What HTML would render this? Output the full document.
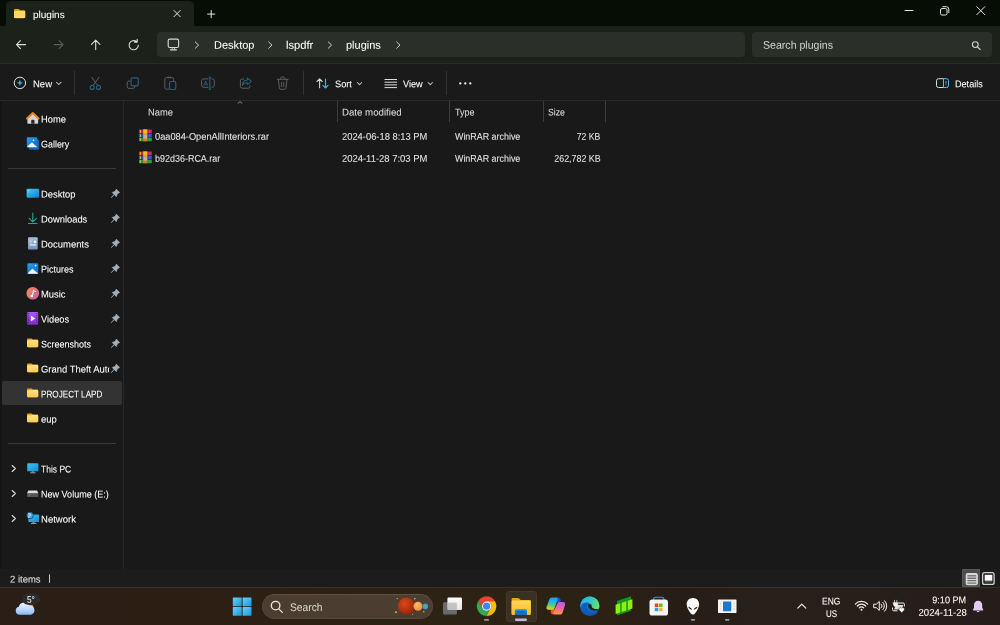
<!DOCTYPE html>
<html><head><meta charset="utf-8"><title>plugins</title>
<style>
*{box-sizing:border-box;margin:0;padding:0}
html,body{width:1000px;height:625px;overflow:hidden;background:#191919;font-family:"Liberation Sans",sans-serif;color:#fff}
.a{position:absolute}
.t{position:absolute;white-space:nowrap;line-height:1;}
#titlebar{left:0;top:0;width:1000px;height:26px;background:#060d05}
#tab{left:6px;top:0.6px;width:187.8px;height:25.4px;background:#1c211a;border-radius:5px 5px 0 0}
#navbar{left:0;top:26px;width:1000px;height:37.4px;background:#1c211a}
#addr{left:156.8px;top:32.2px;width:588px;height:25.1px;background:#2b2f29;border-radius:4px}
#search{left:751.7px;top:32.2px;width:240px;height:25.1px;background:#2b2f29;border-radius:4px}
#toolbar{left:0;top:63.3px;width:1000px;height:38.1px;background:#1a1a1a;border-top:1.4px solid #2a2a2a;border-bottom:1.4px solid #292929}
#sidebar{left:0;top:101px;width:124px;height:468px;background:#191919;border-right:1px solid #292929}
#sel{left:1.8px;top:380.9px;width:120px;height:24.6px;background:#333333;border-radius:2px}
#status{left:0;top:569px;width:1000px;height:18px;background:#1c1c1c}
#taskbar{left:0;top:587.3px;width:1000px;height:38px;background:linear-gradient(90deg,#2b1e16 0%,#2d1e13 20%,#2c2314 44%,#2c2214 60%,#271d17 68%,#28201a 77%,#251d19 100%);border-top:1.4px solid #3a3026}
#tsearch{left:261.8px;top:593.8px;width:171.6px;height:24.8px;background:#4b3e31;border-radius:12.4px;border:1px solid #55483b;border-top-color:#5e5246}
#tactive{left:505.6px;top:590.8px;width:31px;height:30.8px;background:#3a3123;border-radius:3px;border:1px solid #443a2c}
#viewsel{left:962.4px;top:569.2px;width:17.4px;height:18.2px;background:#4d4d4d;border:1px solid #585858}
.sep{position:absolute;height:1px;background:#3a3a3a;left:8px;width:108px}
.vsep{position:absolute;width:1px;background:#333}
.csep{position:absolute;width:1.2px;background:#3c3c3c;top:100.6px;height:21px}
</style></head><body>
<div class="a" id="titlebar"></div>
<div class="a" id="tab"></div>
<div class="a" id="navbar"></div>
<div class="a" id="addr"></div>
<div class="a" id="search"></div>
<div class="a" id="toolbar"></div>
<div class="a" id="sidebar"></div>
<div class="a" id="sel"></div>
<div class="a" style="left:0;top:102px;width:1.5px;height:467px;background:#141414"></div>
<div class="sep" style="top:168px"></div>
<div class="sep" style="top:443px"></div>
<div class="vsep" style="left:74px;top:71px;height:24px"></div>
<div class="vsep" style="left:303px;top:71px;height:24px"></div>
<div class="vsep" style="left:446px;top:71px;height:24px"></div>
<div class="csep" style="left:336.9px"></div>
<div class="csep" style="left:449px"></div>
<div class="csep" style="left:543px"></div>
<div class="csep" style="left:605px"></div>
<div class="a" id="status"></div>
<div class="a" id="viewsel"></div>
<div class="a" id="taskbar"></div>
<div class="a" id="tsearch"></div>
<div class="a" id="tactive"></div>
<svg class="a" width="1000" height="625" viewBox="0 0 1000 625" style="left:0;top:0">
<!-- tab folder -->
<g id="tabfolder">
<path d="M14 10.2c0-.7.5-1.2 1.2-1.2h3.1c.4 0 .7.1 1 .4l1 .9h3.7c.7 0 1.2.5 1.2 1.2v5.5c0 .7-.5 1.2-1.2 1.2h-8.800c-.7 0-1.200-.5-1.200-1.200z" fill="#e6a21c"/>
<path d="M14 12c0-.6.5-1.100 1.100-1.100h9c.6 0 1.100.5 1.100 1.100v5c0 .6-.5 1.100-1.100 1.100h-9c-.6 0-1.100-.5-1.100-1.100z" fill="#ffd968"/>
</g>
<!-- tab close, plus -->
<g stroke="#e4e4e4" stroke-width="1" fill="none" stroke-linecap="round">
<path d="M174 10.500l6.200 6.200M180.200 10.500l-6.200 6.200"/>
<path d="M207.200 14.100h8M211.200 10.100v8" stroke-linecap="butt"/>
<!-- window controls -->
<path d="M905 10.500h8"/>
<path d="M976.800 6.700l8 8M984.800 6.700l-8 8"/>
</g>
<g stroke="#e4e4e4" stroke-width="1" fill="none">
<rect x="940.500" y="8.500" width="6.500" height="6.500" rx="1.500"/>
<path d="M942.500 6.700h3.800a2.500 2.500 0 0 1 2.500 2.500v3.800"/>
</g>
<!-- nav arrows -->
<g stroke="#dcdcdc" stroke-width="1.100" fill="none" stroke-linecap="round" stroke-linejoin="round">
<path d="M25.600 44.600h-8.800M20.400 40.700l-3.900 3.900 3.900 3.900"/>
<path d="M95.700 49.600v-9.200M91.500 44.400l4.200-4.200 4.200 4.200"/>
<path d="M138.300 45.200a4.600 4.600 0 1 1-1.800-3.650M137.200 39.400v2.700h-2.700"/>
</g>
<g stroke="#5b5e5a" stroke-width="1.100" fill="none" stroke-linecap="round" stroke-linejoin="round">
<path d="M54.200 44.600h8.800M59.200 40.700l3.900 3.900-3.900 3.900"/>
</g>
<!-- monitor in address -->
<g stroke="#d8d8d8" stroke-width="1.100" fill="none" stroke-linecap="round" stroke-linejoin="round">
<rect x="168.200" y="39.100" width="10.400" height="8.400" rx="1.500"/>
<path d="M170.400 49.800h6" stroke-width="1.300"/><path d="M172.200 48v1.500M174.600 48v1.500" stroke-width=".9"/>
</g>
<!-- breadcrumbs chevrons -->
<g stroke="#d0d0d0" stroke-width="1" fill="none" stroke-linecap="round" stroke-linejoin="round">
<path d="M195.300 42l3.300 3.100-3.300 3.100"/>
<path d="M268.700 42l3.300 3.100-3.300 3.100"/>
<path d="M328.300 42l3.300 3.100-3.300 3.100"/>
<path d="M396.700 42l3.300 3.100-3.300 3.100"/>
</g>
<!-- search icon -->
<g stroke="#d4d4d4" stroke-width="1.100" fill="none" stroke-linecap="round">
<circle cx="975.300" cy="44.600" r="2.900"/>
<path d="M977.500 46.800l2.700 2.700"/>
</g>
<!-- NEW -->
<circle cx="19.900" cy="82.900" r="5.700" fill="none" stroke="#e4e4e4" stroke-width="1"/>
<path d="M17.500 82.900h4.800M19.900 80.500v4.800" stroke="#3fb0ea" stroke-width="1.300" stroke-linecap="butt"/>
<g stroke="#c2c2c2" stroke-width="1.050" fill="none" stroke-linecap="round" stroke-linejoin="round">
<path d="M56.600 82.300l2.200 2.200 2.200-2.200"/>
<path d="M357.300 82.500l2.200 2.200 2.200-2.200"/>
<path d="M428.100 82.500l2.200 2.200 2.200-2.200"/>
</g>
<!-- cut -->
<g fill="none" stroke-width="1" stroke-linecap="round">
<path d="M91.700 77.300l6 8.300M99 77.300l-6 8.300" stroke="#5e5e5e"/>
<circle cx="92.200" cy="87.400" r="2" stroke="#27607f" stroke-width="1.150"/>
<circle cx="98.500" cy="87.400" r="2" stroke="#27607f" stroke-width="1.150"/>
</g>
<!-- copy -->
<g fill="none" stroke-width="1">
<path d="M130.300 81h-1.300a1.800 1.800 0 0 0-1.800 1.800v3.800a1.800 1.800 0 0 0 1.800 1.800h4a1.800 1.800 0 0 0 1.800-1.800v-.600" stroke="#5e5e5e"/>
<rect x="131.100" y="77.900" width="7.200" height="8" rx="1.600" stroke="#27607f" stroke-width="1.150"/>
</g>
<!-- paste -->
<g fill="none" stroke-width="1">
<path d="M169 89.200h-2.400a1.800 1.800 0 0 1-1.800-1.800v-8a1.800 1.800 0 0 1 1.800-1.800h5.300a1.800 1.800 0 0 1 1.800 1.800v1.600" stroke="#5e5e5e"/>
<path d="M167.500 77.400h3.600" stroke="#5e5e5e" stroke-width="1.400"/>
<rect x="169.500" y="81.500" width="6.300" height="8" rx="1.400" stroke="#27607f" stroke-width="1.150"/>
</g>
<!-- rename -->
<g fill="none" stroke-width="1">
<path d="M208.300 78.900h-4.700a2 2 0 0 0-2 2v4.400a2 2 0 0 0 2 2h4.700M211.500 78.900h.8a2 2 0 0 1 2 2v4.400a2 2 0 0 1-2 2h-.8" stroke="#5e5e5e"/>
<path d="M203.900 85.600l1.800-4.600 1.800 4.600M204.500 84.200h2.400" stroke="#27607f" stroke-width=".9"/>
<path d="M209.900 77.400v11.800M208.700 77.300h2.400M208.700 89.300h2.400" stroke="#27607f" stroke-width="1.100"/>
</g>
<!-- share -->
<g fill="none" stroke-width="1" stroke-linejoin="round">
<path d="M244.200 79h-2a1.800 1.800 0 0 0-1.800 1.800v5.600a1.800 1.800 0 0 0 1.800 1.800h6a1.800 1.800 0 0 0 1.800-1.800v-1.200" stroke="#5e5e5e"/>
<path d="M247.400 77.900l4 3.400-4 3.400v-2c-2.300 0-3.900.8-5 2.500.2-3 1.900-4.900 5-5.300z" stroke="#27607f" stroke-width="1.050"/>
</g>
<!-- delete -->
<g fill="none" stroke-width="1" stroke="#5e5e5e" stroke-linecap="round">
<path d="M277.300 79.300h10.800M280.600 79v-.6a1.400 1.400 0 0 1 1.400-1.400h1.400a1.400 1.400 0 0 1 1.400 1.400v.6"/>
<path d="M278.500 79.500l.8 8.300a1.700 1.700 0 0 0 1.700 1.500h3.400a1.700 1.700 0 0 0 1.700-1.500l.8-8.300"/>
<path d="M281.600 82.200v4.300M283.800 82.200v4.300"/>
</g>
<!-- sort -->
<g fill="none" stroke-width="1.100" stroke-linecap="round" stroke-linejoin="round">
<path d="M319.600 87.700v-8.700M317 81.500l2.600-2.600 2.600 2.600" stroke="#d6d6d6"/>
<path d="M325.500 79v8.900M322.900 85.400l2.600 2.600 2.600-2.600" stroke="#43b4ee"/>
</g>
<!-- view -->
<g stroke="#dedede" stroke-width="1" stroke-linecap="butt">
<path d="M384.500 79.500h12.500M384.500 82.200h12.500M384.500 84.900h12.500M384.500 87.600h12.500"/>
</g>
<!-- more -->
<g fill="#f0f0f0"><circle cx="460.300" cy="83.400" r="1.150"/><circle cx="465.300" cy="83.400" r="1.150"/><circle cx="470.300" cy="83.400" r="1.150"/></g>
<!-- details pane icon -->
<g fill="none" stroke-width="1">
<path d="M943.500 78.700h-5a2 2 0 0 0-2 2v4.800a2 2 0 0 0 2 2h5" stroke="#dedede"/>
<path d="M943.500 78.700h3a2 2 0 0 1 2 2v4.800a2 2 0 0 1-2 2h-3z" stroke="#4cc2ff"/>
<path d="M946 81v2.600M946 84.600v.8" stroke="#4cc2ff" stroke-width=".9"/>
</g>
<!-- sort caret above Name -->
<path d="M237.800 103.500l2.200-1.900 2.200 1.900" stroke="#9a9a9a" stroke-width=".9" fill="none"/>
<path d="M3.500 26h2.500v-2.500a2.500 2.500 0 0 1-2.500 2.500z" fill="#1c211a"/>
<path d="M196.300 26h-2.500v-2.500a2.500 2.500 0 0 0 2.500 2.500z" fill="#1c211a"/>
<defs>
<linearGradient id="gDesk" x1="0" y1="0" x2="1" y2="1"><stop offset="0" stop-color="#3ad0ee"/><stop offset="1" stop-color="#157cd0"/></linearGradient>
<linearGradient id="gPic" x1="0" y1="0" x2="0.6" y2="1"><stop offset="0" stop-color="#22a0f4"/><stop offset="1" stop-color="#0f6cc8"/></linearGradient>
<linearGradient id="gDoc" x1="0" y1="0" x2="0" y2="1"><stop offset="0" stop-color="#aabedb"/><stop offset="1" stop-color="#7a93bd"/></linearGradient>
<linearGradient id="gMus" x1="0" y1="0.2" x2="1" y2="0.9"><stop offset="0" stop-color="#f38a52"/><stop offset="1" stop-color="#c45cb0"/></linearGradient>
<linearGradient id="gVid" x1="0" y1="0" x2="0" y2="1"><stop offset="0" stop-color="#a85cf4"/><stop offset="1" stop-color="#7c2cc4"/></linearGradient>
<linearGradient id="gFol" x1="0" y1="0" x2="0" y2="1"><stop offset="0" stop-color="#ffe28e"/><stop offset="1" stop-color="#ffcd4c"/></linearGradient>
<linearGradient id="gPC" x1="0" y1="0" x2="1" y2="1"><stop offset="0" stop-color="#34c8f2"/><stop offset="1" stop-color="#168ad6"/></linearGradient>
<linearGradient id="gStrap" x1="0" y1="0" x2="0" y2="1"><stop offset="0" stop-color="#f2cc2a"/><stop offset=".45" stop-color="#ec9a1e"/><stop offset="1" stop-color="#dc6e16"/></linearGradient>
</defs>
<!-- Home -->
<path d="M27.400 117.300l5.400-4.400 5.400 4.400v5.400c0 .600-.500 1.100-1.100 1.100h-8.600c-.600 0-1.100-.500-1.100-1.100z" fill="#d4d4d4"/>
<path d="M31.200 123.800v-3c0-.600.500-1.100 1.100-1.100h1.100c.600 0 1.100.500 1.100 1.100v3z" fill="#2a2a2a"/>
<path d="M27 118.500l5.800-5.500 5.800 5.500" fill="none" stroke="#f0820f" stroke-width="2" stroke-linecap="round" stroke-linejoin="round"/>
<!-- Gallery -->
<rect x="28.800" y="139.600" width="10.400" height="10.200" rx="1.300" fill="#1763b5"/>
<rect x="26.800" y="137.200" width="10.500" height="10.100" rx="1.300" fill="url(#gPic)"/>
<path d="M27.300 147l4.500-4.600 4.900 4.600z" fill="#fff" stroke="#fff" stroke-width=".5" stroke-linejoin="round"/>
<circle cx="33.500" cy="140.200" r=".800" fill="#fff"/>
<!-- Desktop -->
<rect x="26.600" y="188.800" width="12.600" height="9" rx="1.100" fill="url(#gDesk)"/>
<rect x="27.700" y="190" width=".900" height=".800" fill="#c8f4ff"/><rect x="27.700" y="191.600" width=".900" height=".800" fill="#c8f4ff"/>
<rect x="35" y="196.700" width="3.200" height=".600" fill="#0d5fae"/>
<!-- Downloads -->
<g fill="none" stroke="#1fab8b" stroke-width="1.100" stroke-linecap="round" stroke-linejoin="round">
<path d="M32.800 213.100v8.400M29.100 218.300l3.700 3.500 3.700-3.500M28.500 223.500h8.600"/>
</g>
<!-- Documents -->
<rect x="28" y="237.200" width="9.700" height="12.300" rx="1.100" fill="url(#gDoc)"/>
<path d="M29.800 241h1.900M29.800 242.800h1.900" stroke="#e8f0ff" stroke-width=".700"/>
<rect x="33.800" y="240.700" width="2.200" height="2.300" fill="#f4f8ff"/>
<path d="M29.800 244.900h6.200" stroke="#e8f0ff" stroke-width="1.200"/>
<!-- Pictures -->
<rect x="27.400" y="263.200" width="10.900" height="10.700" rx="1.300" fill="url(#gPic)"/>
<path d="M27.900 273.400l4.500-4.500 5.400 4.500z" fill="#fff" stroke="#fff" stroke-width=".5" stroke-linejoin="round"/>
<circle cx="35.600" cy="265.600" r=".900" fill="#fff"/>
<!-- Music -->
<circle cx="32.800" cy="293.200" r="6.300" fill="url(#gMus)"/>
<circle cx="31.700" cy="296" r="1.300" fill="#fff"/>
<path d="M32.500 296l.9-5.600 2.400 1.200" fill="none" stroke="#fff" stroke-width="1" stroke-linejoin="round" stroke-linecap="round"/>
<!-- Videos -->
<rect x="27.200" y="312" width="11" height="12.800" rx="1.100" fill="url(#gVid)"/>
<path d="M28.700 313v11M36.800 313v11" stroke="#5a1c9a" stroke-width="1.200" stroke-dasharray="1.100 1.100"/>
<path d="M30.900 315.600v5.800l4.400-2.900z" fill="#f4ecff"/>
<!-- folders -->
<g transform="translate(27 338.600)">
<path d="M0 1.100c0-.6.500-1.100 1.100-1.100h3c.400 0 .700.100 1 .400l.900.800h4.100c.600 0 1.100.500 1.100 1.100v5.200c0 .600-.500 1.100-1.100 1.100h-9c-.600 0-1.100-.500-1.100-1.100z" fill="#e9a318"/>
<path d="M0 2.600c0-.500.400-.900.900-.900h2.600c.500 0 .900-.100 1.300-.400l.300-.200h5c.600 0 1.100.500 1.100 1.100v5.300c0 .600-.500 1.100-1.100 1.100h-9c-.600 0-1.100-.500-1.100-1.100z" fill="url(#gFol)"/>
</g>
<g transform="translate(27 363.600)">
<path d="M0 1.100c0-.6.500-1.100 1.100-1.100h3c.400 0 .700.100 1 .400l.900.800h4.100c.600 0 1.100.500 1.100 1.100v5.200c0 .600-.500 1.100-1.100 1.100h-9c-.600 0-1.100-.500-1.100-1.100z" fill="#e9a318"/>
<path d="M0 2.600c0-.500.400-.900.900-.900h2.600c.500 0 .900-.100 1.300-.400l.300-.200h5c.600 0 1.100.500 1.100 1.100v5.300c0 .600-.500 1.100-1.100 1.100h-9c-.600 0-1.100-.500-1.100-1.100z" fill="url(#gFol)"/>
</g>
<g transform="translate(27 388.600)">
<path d="M0 1.100c0-.6.500-1.100 1.100-1.100h3c.400 0 .700.100 1 .400l.900.800h4.100c.600 0 1.100.500 1.100 1.100v5.200c0 .600-.500 1.100-1.100 1.100h-9c-.600 0-1.100-.500-1.100-1.100z" fill="#e9a318"/>
<path d="M0 2.600c0-.500.400-.900.900-.900h2.600c.500 0 .900-.100 1.300-.400l.300-.200h5c.600 0 1.100.500 1.100 1.100v5.300c0 .600-.500 1.100-1.100 1.100h-9c-.600 0-1.100-.500-1.100-1.100z" fill="url(#gFol)"/>
</g>
<g transform="translate(27 413.600)">
<path d="M0 1.100c0-.6.500-1.100 1.100-1.100h3c.400 0 .700.100 1 .400l.900.800h4.100c.600 0 1.100.500 1.100 1.100v5.200c0 .600-.500 1.100-1.100 1.100h-9c-.600 0-1.100-.500-1.100-1.100z" fill="#e9a318"/>
<path d="M0 2.600c0-.500.400-.900.900-.900h2.600c.500 0 .900-.100 1.300-.400l.300-.200h5c.600 0 1.100.500 1.100 1.100v5.300c0 .600-.500 1.100-1.100 1.100h-9c-.600 0-1.100-.500-1.100-1.100z" fill="url(#gFol)"/>
</g>
<!-- pins -->
<g transform="translate(111 189)"><path d="M5.300 0.100L8.700 3.500L6.500 4.700L5.300 7.700L3.300 5.700L0.350 8.650L0.150 8.450L3.100 5.500L1.100 3.500L4.100 2.300Z" fill="#a3afb8" stroke="#a3afb8" stroke-width=".5" stroke-linejoin="round"/></g><g transform="translate(111 214)"><path d="M5.300 0.100L8.700 3.500L6.500 4.700L5.300 7.700L3.300 5.700L0.350 8.650L0.150 8.450L3.100 5.500L1.100 3.500L4.100 2.300Z" fill="#a3afb8" stroke="#a3afb8" stroke-width=".5" stroke-linejoin="round"/></g><g transform="translate(111 239)"><path d="M5.300 0.100L8.700 3.500L6.500 4.700L5.300 7.700L3.300 5.700L0.350 8.650L0.150 8.450L3.100 5.500L1.100 3.500L4.100 2.300Z" fill="#a3afb8" stroke="#a3afb8" stroke-width=".5" stroke-linejoin="round"/></g><g transform="translate(111 264)"><path d="M5.300 0.100L8.700 3.500L6.500 4.700L5.300 7.700L3.300 5.700L0.350 8.650L0.150 8.450L3.100 5.500L1.100 3.500L4.100 2.300Z" fill="#a3afb8" stroke="#a3afb8" stroke-width=".5" stroke-linejoin="round"/></g>
<g transform="translate(111 289)"><path d="M5.300 0.100L8.700 3.500L6.500 4.700L5.300 7.700L3.300 5.700L0.350 8.650L0.150 8.450L3.100 5.500L1.100 3.500L4.100 2.300Z" fill="#a3afb8" stroke="#a3afb8" stroke-width=".5" stroke-linejoin="round"/></g><g transform="translate(111 314)"><path d="M5.300 0.100L8.700 3.500L6.500 4.700L5.300 7.700L3.300 5.700L0.350 8.650L0.150 8.450L3.100 5.500L1.100 3.500L4.100 2.300Z" fill="#a3afb8" stroke="#a3afb8" stroke-width=".5" stroke-linejoin="round"/></g><g transform="translate(111 339)"><path d="M5.300 0.100L8.700 3.500L6.500 4.700L5.300 7.700L3.300 5.700L0.350 8.650L0.150 8.450L3.100 5.500L1.100 3.500L4.100 2.300Z" fill="#a3afb8" stroke="#a3afb8" stroke-width=".5" stroke-linejoin="round"/></g><g transform="translate(111 364)"><path d="M5.300 0.100L8.700 3.500L6.500 4.700L5.300 7.700L3.300 5.700L0.350 8.650L0.150 8.450L3.100 5.500L1.100 3.500L4.100 2.300Z" fill="#a3afb8" stroke="#a3afb8" stroke-width=".5" stroke-linejoin="round"/></g>
<!-- chevrons -->
<g transform="translate(11.900 465.200)"><path d="M.3 .3l3.200 3-3.200 3" fill="none" stroke="#dcdcdc" stroke-width="1.100" stroke-linecap="round" stroke-linejoin="round"/></g><g transform="translate(11.900 490.200)"><path d="M.3 .3l3.200 3-3.200 3" fill="none" stroke="#dcdcdc" stroke-width="1.100" stroke-linecap="round" stroke-linejoin="round"/></g><g transform="translate(11.900 515.200)"><path d="M.3 .3l3.200 3-3.200 3" fill="none" stroke="#dcdcdc" stroke-width="1.100" stroke-linecap="round" stroke-linejoin="round"/></g>
<!-- This PC -->
<rect x="27.200" y="463.200" width="11.200" height="8.100" rx=".900" fill="url(#gPC)"/>
<path d="M31.600 471.300h2.400v1.200h-2.400z" fill="#8a9aa8"/><path d="M30 472.500h5.600v.800h-5.600z" fill="#b8c4cc"/>
<!-- New Volume -->
<path d="M28.300 490.400h8.800l1.300 3h-11.400z" fill="#dcdcdc"/>
<rect x="27" y="493.400" width="11.400" height="3.500" rx=".700" fill="#555"/>
<rect x="28.900" y="494.600" width="1.200" height=".900" fill="#35d23c"/>
<!-- Network -->
<rect x="28.400" y="514.400" width="10.700" height="7.700" rx=".900" fill="url(#gPC)"/>
<path d="M32.400 522.100h2.400v1.100h-2.400z" fill="#8a9aa8"/><path d="M31 523.200h5.400v.800h-5.400z" fill="#b8c4cc"/>
<circle cx="30" cy="515.400" r="3.300" fill="#4aa8ee" stroke="#191919" stroke-width=".600"/>
<path d="M28 514.200c.800-.900 1.800-.700 2.300.100s-.300 1.500-1 1.700-.900 1-.400 1.800" fill="none" stroke="#e8f6ff" stroke-width="1"/>
<!-- status bar: cursor bar + view buttons -->
<path d="M49.500 574.400v8.400" stroke="#e0e0e0" stroke-width=".900"/>
<rect x="965.700" y="572.900" width="12.200" height="12.300" rx="2" fill="#d8d8d8"/>
<path d="M967.400 575.800h8.800M967.400 578.300h8.800M967.400 580.700h8.800M967.400 583.100h8.800" stroke="#484848" stroke-width=".900"/>
<rect x="967.400" y="576.300" width="8.800" height="1.500" fill="#a0a0a0"/>
<rect x="982.600" y="572.700" width="11.500" height="11.700" rx="2" fill="none" stroke="#d0d0d0" stroke-width="1.300"/>
<rect x="984.700" y="574.800" width="7.600" height="5.900" fill="#fafafa"/>
<rect x="984.700" y="581.100" width="7.600" height="1.400" fill="#5a5a5a"/>
<!-- WinRAR icons -->
<g>
<rect x="138.900" y="129.400" width="13" height="4.100" rx=".500" fill="#c6244c"/>
<rect x="138.900" y="133.500" width="13" height="4" fill="#3547c6"/>
<rect x="138.900" y="137.500" width="13" height="3.800" rx=".500" fill="#1b9a3b"/>
<path d="M138.900 133.500h13M138.900 137.500h13" stroke="#2a1a30" stroke-width=".500" opacity=".7"/>
<path d="M140.400 130v3M140.400 134.100v2.900M140.400 138.100v2.800" stroke="#ecc62e" stroke-width=".900"/>
<path d="M149.800 130v3" stroke="#e04a6a" stroke-width=".700"/><path d="M149.800 134.100v2.900" stroke="#5a6ae0" stroke-width=".700"/><path d="M149.800 138.100v2.800" stroke="#3cba5a" stroke-width=".700"/>
<rect x="143.200" y="129.400" width="4.100" height="11.900" fill="url(#gStrap)"/>
<rect x="143.500" y="135.300" width="3.500" height="3.100" rx=".500" fill="#ededed" stroke="#8a6a30" stroke-width=".400"/>
<path d="M144.300 136l.500 1.700.500-1.300.500 1.300.500-1.700" stroke="#6a5a4a" stroke-width=".400" fill="none"/>
</g>
<g transform="translate(0 22)">
<rect x="138.900" y="129.400" width="13" height="4.100" rx=".500" fill="#c6244c"/>
<rect x="138.900" y="133.500" width="13" height="4" fill="#3547c6"/>
<rect x="138.900" y="137.500" width="13" height="3.800" rx=".500" fill="#1b9a3b"/>
<path d="M138.900 133.500h13M138.900 137.500h13" stroke="#2a1a30" stroke-width=".500" opacity=".7"/>
<path d="M140.400 130v3M140.400 134.100v2.900M140.400 138.100v2.800" stroke="#ecc62e" stroke-width=".900"/>
<path d="M149.800 130v3" stroke="#e04a6a" stroke-width=".700"/><path d="M149.800 134.100v2.900" stroke="#5a6ae0" stroke-width=".700"/><path d="M149.800 138.100v2.800" stroke="#3cba5a" stroke-width=".700"/>
<rect x="143.200" y="129.400" width="4.100" height="11.900" fill="url(#gStrap)"/>
<rect x="143.500" y="135.300" width="3.500" height="3.100" rx=".500" fill="#ededed" stroke="#8a6a30" stroke-width=".400"/>
<path d="M144.300 136l.500 1.700.500-1.300.500 1.300.500-1.700" stroke="#6a5a4a" stroke-width=".400" fill="none"/>
</g>
<defs>
<linearGradient id="gWin" x1="0" y1="0" x2="1" y2="1"><stop offset="0" stop-color="#6ad2f8"/><stop offset="1" stop-color="#1596e6"/></linearGradient>
<linearGradient id="gCloud" x1="0" y1="0" x2="0" y2="1"><stop offset="0" stop-color="#eef4ff"/><stop offset=".5" stop-color="#c4dcfc"/><stop offset="1" stop-color="#8ab6f2"/></linearGradient>
<radialGradient id="gMars" cx=".4" cy=".35" r=".7"><stop offset="0" stop-color="#d8481a"/><stop offset="1" stop-color="#9a2406"/></radialGradient>
<radialGradient id="gOr" cx=".4" cy=".35" r=".7"><stop offset="0" stop-color="#ffc070"/><stop offset="1" stop-color="#e8883a"/></radialGradient>
<linearGradient id="gExp" x1="0" y1="0" x2="0" y2="1"><stop offset="0" stop-color="#ffd860"/><stop offset="1" stop-color="#ffbc1c"/></linearGradient>
<linearGradient id="gExpB" x1="0" y1="0" x2="0" y2="1"><stop offset="0" stop-color="#1f96e8"/><stop offset="1" stop-color="#0f68c0"/></linearGradient>
<linearGradient id="gCopL" x1="0.5" y1="0" x2="0.4" y2="1"><stop offset="0" stop-color="#18a0fa"/><stop offset=".4" stop-color="#2cb8d8"/><stop offset=".65" stop-color="#58cc70"/><stop offset="1" stop-color="#f6d814"/></linearGradient>
<linearGradient id="gCopR" x1="0.6" y1="0" x2="0.4" y2="1"><stop offset="0" stop-color="#b060f4"/><stop offset=".45" stop-color="#f060a4"/><stop offset="1" stop-color="#ff9a44"/></linearGradient>
<linearGradient id="gEdgeB" x1="0" y1="0" x2=".6" y2="1"><stop offset="0" stop-color="#1c94ea"/><stop offset="1" stop-color="#0c5cbc"/></linearGradient><linearGradient id="gEdgeT" x1="0" y1=".3" x2="1" y2=".6"><stop offset="0" stop-color="#2aaef4"/><stop offset=".5" stop-color="#34c6c4"/><stop offset="1" stop-color="#66e468"/></linearGradient>
<linearGradient id="gTV" x1="0" y1="0" x2="0" y2="1"><stop offset="0" stop-color="#fdfdfd"/><stop offset="1" stop-color="#e6e6e6"/></linearGradient>
<clipPath id="cChrome"><circle cx="486.600" cy="606.200" r="9.600"/></clipPath>
</defs>
<!-- weather -->
<circle cx="30.800" cy="607" r="2.600" fill="#f08a18"/>
<path d="M19.500 614.700a4 4 0 0 1-.600-7.900a5.600 5.600 0 0 1 10.400-1.300a4.700 4.700 0 0 1 1.700 9.200z" fill="url(#gCloud)"/>
<rect x="22.100" y="593.300" width="18.100" height="11.500" rx="5.750" fill="#2b2b2b"/>
<!-- windows logo -->
<g fill="url(#gWin)">
<rect x="232.800" y="597.500" width="8.900" height="8.700" rx=".600"/><rect x="242.600" y="597.500" width="8.900" height="8.700" rx=".600"/>
<rect x="232.800" y="607.100" width="8.900" height="8.700" rx=".600"/><rect x="242.600" y="607.100" width="8.900" height="8.700" rx=".600"/>
</g>
<!-- taskbar search icon -->
<g fill="none" stroke="#ece6e0" stroke-width="1.300" stroke-linecap="round"><circle cx="275.600" cy="605.600" r="4.300"/><path d="M278.800 608.900l3.500 3.500"/></g>
<!-- planets -->
<circle cx="406.300" cy="606" r="8.400" fill="url(#gMars)"/>
<circle cx="418" cy="606.300" r="4.500" fill="url(#gOr)"/>
<circle cx="425.300" cy="606.400" r="2.800" fill="#3a9ad8"/><path d="M424 605.200q1.500-.600 2.500.800t-.800 2.200z" fill="#5ac060"/>
<g fill="#f0c040"><circle cx="397.200" cy="598.700" r=".600"/><circle cx="396" cy="612.200" r=".900"/><circle cx="414.800" cy="598.700" r=".800"/><circle cx="423.800" cy="611.800" r=".700"/><circle cx="412.600" cy="614.200" r=".500"/></g>
<!-- task view -->
<rect x="443" y="602.300" width="13.900" height="12.100" rx="1.200" fill="#6a6a6a"/>
<rect x="447.400" y="597.600" width="14.600" height="12.400" rx="1.200" fill="url(#gTV)"/>
<rect x="447.400" y="602.600" width="9.500" height="7.400" fill="#9a9a9a" opacity=".5"/>
<!-- chrome -->
<path d="M478.400 601.200A9.600 9.600 0 0 1 495.030 601.600L486.600 601.600A4.600 4.600 0 0 0 482.620 608.500Z" fill="#ea4335" stroke="#ea4335" stroke-width=".3"/>
<path d="M495.030 601.600A9.600 9.600 0 0 1 486.370 615.800L490.580 608.500A4.600 4.600 0 0 0 486.600 601.600Z" fill="#fbbc04" stroke="#fbbc04" stroke-width=".3"/>
<path d="M486.370 615.800A9.600 9.600 0 0 1 478.400 601.200L482.620 608.500A4.600 4.600 0 0 0 490.580 608.500Z" fill="#34a853" stroke="#34a853" stroke-width=".3"/>
<circle cx="486.600" cy="606.200" r="4.600" fill="#fff"/><circle cx="486.600" cy="606.200" r="3.600" fill="#4285f4"/>
<rect x="484" y="619" width="5" height="1.800" rx=".900" fill="#9a978e"/>
<!-- explorer -->
<path d="M511.600 599.200c0-.700.500-1.200 1.200-1.200h5.200c.500 0 .900.200 1.200.500l1.400 1.600h9c.700 0 1.200.500 1.200 1.200v12.500c0 .700-.500 1.200-1.200 1.200h-16.800c-.700 0-1.200-.500-1.200-1.200z" fill="#f0a400"/>
<path d="M511.600 601.700c0-.700.500-1.200 1.200-1.200h16.800c.700 0 1.200.500 1.200 1.200v12.100c0 .700-.500 1.200-1.200 1.200h-16.800c-.700 0-1.200-.500-1.200-1.200z" fill="url(#gExp)"/>
<path d="M514.800 615v-4.200c0-.900.700-1.600 1.600-1.600h9c.900 0 1.600.700 1.600 1.600v4.200z" fill="url(#gExpB)"/>
<rect x="517" y="611.400" width="7.800" height="1.200" rx=".600" fill="#0b55a4"/>
<rect x="514.900" y="618.600" width="12.100" height="2.300" rx="1.150" fill="#c8b6ea"/>
<!-- copilot -->
<path d="M555.500 597.500h2.500c1.800 0 2.600 1 2.600 2.600l-.300 2h-4.500z" fill="#1a4cd2"/>
<path d="M551 609.300h4l-1 5.200h-.800c-1.600 0-2.500-1-2.500-2.400z" fill="#f0501e"/>
<path d="M549.300 599.600c.400-1.400 1.400-2.100 2.800-2.100h4c1.300 0 1.900.900 1.500 2.200l-2.900 8.300c-.400 1.200-1.300 1.800-2.500 1.800h-3.600c-1.700 0-2.500-1.200-2-2.800z" fill="url(#gCopL)"/>
<path d="M557.100 603.900c.400-1.200 1.300-1.800 2.500-1.800h3.400c1.700 0 2.500 1.200 2 2.800l-2.300 7.500c-.400 1.400-1.400 2.100-2.800 2.100h-5c-1.300 0-1.900-.900-1.500-2.200z" fill="url(#gCopR)"/>
<!-- edge -->
<circle cx="589.800" cy="606.100" r="9.600" fill="url(#gEdgeB)"/>
<path d="M580.300 607.500c-.500-5.700 3.800-11 9.500-11 5.300 0 9.600 4.300 9.600 9.600 0 1.200-.300 2.300-.800 3.200-1.300.300-3 .200-4.400-.200-1.900-.500-2.800-1.800-2.700-3.600 0-1.100-.700-1.900-1.800-1.900-1.600 0-3 .300-4.500-.600-2.400-.700-4.400 1.600-4.900 4.500z" fill="url(#gEdgeT)"/>
<path d="M581.200 610c-.600-3.600 1.600-7.200 5-7.600 1.300-.200 2.600.200 3.500.900-1.700.300-2.900 1.800-2.800 3.700.200 3.800 3.800 6.300 8.200 5.900 1.200-.100 2.300-.500 3.200-1-1.800 2.500-4.800 3.800-8.300 3.800-4.200 0-7.800-2.200-8.800-5.700z" fill="#0c58b4" opacity=".8"/>
<circle cx="589.700" cy="605.800" r="1.800" fill="#2c2214"/>
<path d="M588.500 607c.600 2 2.600 3.300 5.400 3.500 1.700.100 3.300-.100 4.500-.600l.500-1.200c-1.300.400-3 .500-4.600.100-1.900-.500-3-1.800-3-3.500z" fill="#2c2214"/>
<!-- green bars -->
<g transform="translate(624 606.300) skewY(-18) translate(-624 -606.300)">
<rect x="617" y="598.700" width="14.100" height="14.500" rx=".600" fill="#12981e"/>
<rect x="615.600" y="602.100" width="4.600" height="9.200" fill="#92ee12"/><rect x="621.700" y="602.100" width="4.600" height="9.200" fill="#92ee12"/><rect x="627.800" y="602.100" width="4.600" height="9.200" fill="#92ee12"/>
</g>
<!-- store -->
<path d="M653.600 601.500v-2.300a2 2 0 0 1 2-2h6.300a2 2 0 0 1 2 2v2.300" fill="none" stroke="#26a4ea" stroke-width="1.100"/>
<rect x="649.500" y="599.600" width="18.500" height="15.900" rx="2.600" fill="#f4f4f4"/>
<rect x="654.800" y="603.500" width="3.500" height="3.500" fill="#f0461e"/><rect x="659" y="603.500" width="3.500" height="3.500" fill="#74b81c"/>
<rect x="654.800" y="607.700" width="3.500" height="3.500" fill="#20a0ea"/><rect x="659" y="607.700" width="3.500" height="3.500" fill="#ffb900"/>
<!-- alienware -->
<path d="M692.900 598c3.800 0 6.200 2.800 6.200 6.300 0 3-1.800 6.300-3.800 8.600-.800 1-1.600 1.600-2.400 1.600s-1.600-.600-2.400-1.600c-2-2.300-3.800-5.600-3.800-8.600 0-3.500 2.400-6.300 6.200-6.300z" fill="#fafafa"/>
<path d="M688.200 606.800c1.600.3 3.200 1.300 3.900 3-1.800-.200-3.300-1.200-3.900-3zM697.600 606.800c-1.600.3-3.200 1.300-3.900 3 1.800-.200 3.300-1.200 3.900-3z" fill="#1e1a18"/>
<rect x="690.800" y="619" width="4.300" height="1.700" rx=".850" fill="#a09c98"/>
<!-- window app -->
<rect x="718" y="599.500" width="18.500" height="13.400" rx=".600" fill="#f6f6f6"/>
<rect x="723" y="601.500" width="8.300" height="9.700" rx=".600" fill="#1a78d2"/>
<path d="M720.500 601.500v9.500M734 601.500v9.500" stroke="#d4d4d4" stroke-width="1.400" stroke-dasharray=".8 .8"/>
<rect x="725" y="619" width="4.500" height="1.700" rx=".850" fill="#a09c98"/>
<!-- tray chevron -->
<path d="M797.800 608.200l4-4 4 4" fill="none" stroke="#ececec" stroke-width="1.200" stroke-linecap="round" stroke-linejoin="round"/>
<!-- wifi -->
<g fill="none" stroke="#f0f0f0" stroke-width="1.200" stroke-linecap="round">
<path d="M855.300 604.100A8.600 8.600 0 0 1 867.700 604.100"/>
<path d="M857.300 606A5.800 5.800 0 0 1 865.700 606"/>
<path d="M859.300 607.800A3.100 3.100 0 0 1 863.700 607.800"/>
</g>
<circle cx="861.500" cy="609.700" r="1" fill="#f0f0f0"/>
<!-- volume -->
<g fill="none" stroke="#f2f2f2" stroke-width="1" stroke-linecap="round" stroke-linejoin="round">
<path d="M874.100 604.200h2.200l3-2.700v8.900l-3-2.700h-2.200z"/>
<path d="M881.200 604a2.800 2.800 0 0 1 0 4"/>
<path d="M882.900 602.300a5.200 5.200 0 0 1 0 7.400"/>
<path d="M884.600 600.700a7.400 7.400 0 0 1 0 10.600"/>
</g>
<!-- battery -->
<g fill="none" stroke="#f2f2f2" stroke-width="1" stroke-linejoin="round" stroke-linecap="round">
<path d="M898.500 603h4.600a1.300 1.300 0 0 1 1.300 1.300v1.700M897 610.800h-3.200a1.300 1.300 0 0 1-1.300-1.300v-1.500"/>
<path d="M894.500 600.300v2.200M896.800 600.300v2.200M893.500 602.700h4.300v1.700a2.100 2.100 0 0 1-4.300 0z" fill="#f2f2f2" stroke-width=".700"/>
</g>
<path d="M894 609.600l2-4.600h7.400l-1.700 4.600z" fill="#f2f2f2" opacity=".9"/>
<path d="M901.700 612.700l-2.700-2.600a1.700 1.700 0 0 1 2.700-2a1.700 1.700 0 0 1 2.700 2z" fill="#f8f8f8" stroke="#261c16" stroke-width=".500"/>
<!-- bell -->
<path d="M978.100 600.800c2.500 0 4.100 1.900 4.100 4.300v2.500l1 2.100c.200.400 0 .700-.400.700h-9.400c-.400 0-.600-.300-.400-.700l1-2.100v-2.500c0-2.400 1.600-4.300 4.100-4.300z" fill="#e2caf2"/>
<path d="M976.500 611.100a1.700 1.700 0 0 0 3.200 0z" fill="#e2caf2"/>
</svg>

<div class="a" id="txt" style="left:0;top:0;width:1000px;height:625px;will-change:transform">
<div class="t" id="t0" style="top:10px;font-size:9.9px;color:#fff;left:33.15px;transform-origin:0 0;transform:translateY(0.00px) scaleX(1.0127) rotate(0.03deg);-webkit-text-stroke:0.06px #fff;">plugins</div>
<div class="t" id="t1" style="top:39px;font-size:11px;color:#fff;left:213.55px;transform-origin:0 0;transform:translateY(0.80px) scaleX(1.0033) rotate(0.03deg);-webkit-text-stroke:0.04px #fff;">Desktop</div>
<div class="t" id="t2" style="top:39px;font-size:11px;color:#fff;left:286.15px;transform-origin:0 0;transform:translateY(0.80px) scaleX(1.0144) rotate(0.03deg);-webkit-text-stroke:0.04px #fff;">lspdfr</div>
<div class="t" id="t3" style="top:39px;font-size:11px;color:#fff;left:346.25px;transform-origin:0 0;transform:translateY(0.80px) scaleX(0.9981) rotate(0.03deg);-webkit-text-stroke:0.04px #fff;">plugins</div>
<div class="t" id="t4" style="top:39px;font-size:11px;color:#cfcfcf;left:762.95px;transform-origin:0 0;transform:translateY(0.80px) scaleX(0.9617) rotate(0.03deg);-webkit-text-stroke:0.04px #cfcfcf;">Search plugins</div>
<div class="t" id="t5" style="top:79px;font-size:9.7px;color:#fff;left:32.55px;transform-origin:0 0;transform:translateY(0.20px) scaleX(0.9796) rotate(0.03deg);-webkit-text-stroke:0.06px #fff;">New</div>
<div class="t" id="t6" style="top:79px;font-size:9.7px;color:#fff;left:334.95px;transform-origin:0 0;transform:translateY(0.20px) scaleX(0.9501) rotate(0.03deg);-webkit-text-stroke:0.06px #fff;">Sort</div>
<div class="t" id="t7" style="top:79px;font-size:9.7px;color:#fff;left:403.15px;transform-origin:0 0;transform:translateY(0.20px) scaleX(0.9456) rotate(0.03deg);-webkit-text-stroke:0.06px #fff;">View</div>
<div class="t" id="t8" style="top:79px;font-size:9.7px;color:#fff;left:954.55px;transform-origin:0 0;transform:translateY(0.20px) scaleX(0.9382) rotate(0.03deg);-webkit-text-stroke:0.06px #fff;">Details</div>
<div class="t" id="t9" style="top:107px;font-size:9.7px;color:#dcdcdc;left:148.05px;transform-origin:0 0;transform:translateY(0.50px) scaleX(0.9671) rotate(0.03deg);-webkit-text-stroke:0.06px #dcdcdc;">Name</div>
<div class="t" id="t10" style="top:107px;font-size:9.7px;color:#dcdcdc;left:341.55px;transform-origin:0 0;transform:translateY(0.50px) scaleX(0.9985) rotate(0.03deg);-webkit-text-stroke:0.06px #dcdcdc;">Date modified</div>
<div class="t" id="t11" style="top:107px;font-size:9.7px;color:#dcdcdc;left:454.95px;transform-origin:0 0;transform:translateY(0.50px) scaleX(0.9276) rotate(0.03deg);-webkit-text-stroke:0.06px #dcdcdc;">Type</div>
<div class="t" id="t12" style="top:107px;font-size:9.7px;color:#dcdcdc;left:547.95px;transform-origin:0 0;transform:translateY(0.50px) scaleX(0.8958) rotate(0.03deg);-webkit-text-stroke:0.06px #dcdcdc;">Size</div>
<div class="t" id="t13" style="top:131px;font-size:9.7px;color:#e6e6e6;left:154.85px;transform-origin:0 0;transform:translateY(0.70px) scaleX(0.9544) rotate(0.03deg);-webkit-text-stroke:0.06px #e6e6e6;">0aa084-OpenAllInteriors.rar</div>
<div class="t" id="t14" style="top:131px;font-size:9.7px;color:#e6e6e6;left:341.55px;transform-origin:0 0;transform:translateY(0.70px) scaleX(0.9657) rotate(0.03deg);-webkit-text-stroke:0.06px #e6e6e6;">2024-06-18 8:13 PM</div>
<div class="t" id="t15" style="top:131px;font-size:9.7px;color:#e6e6e6;left:454.55px;transform-origin:0 0;transform:translateY(0.70px) scaleX(0.9188) rotate(0.03deg);-webkit-text-stroke:0.06px #e6e6e6;">WinRAR archive</div>
<div class="t" id="t16" style="top:131px;font-size:9.7px;color:#e6e6e6;right:399.60px;transform-origin:100% 0;transform:translateY(0.70px) scaleX(0.8941) rotate(0.03deg);-webkit-text-stroke:0.06px #e6e6e6;">72 KB</div>
<div class="t" id="t17" style="top:153px;font-size:9.7px;color:#e6e6e6;left:154.85px;transform-origin:0 0;transform:translateY(0.70px) scaleX(0.9256) rotate(0.03deg);-webkit-text-stroke:0.06px #e6e6e6;">b92d36-RCA.rar</div>
<div class="t" id="t18" style="top:153px;font-size:9.7px;color:#e6e6e6;left:341.55px;transform-origin:0 0;transform:translateY(0.70px) scaleX(0.9736) rotate(0.03deg);-webkit-text-stroke:0.06px #e6e6e6;">2024-11-28 7:03 PM</div>
<div class="t" id="t19" style="top:153px;font-size:9.7px;color:#e6e6e6;left:454.55px;transform-origin:0 0;transform:translateY(0.70px) scaleX(0.9188) rotate(0.03deg);-webkit-text-stroke:0.06px #e6e6e6;">WinRAR archive</div>
<div class="t" id="t20" style="top:153px;font-size:9.7px;color:#e6e6e6;right:399.60px;transform-origin:100% 0;transform:translateY(0.70px) scaleX(0.9142) rotate(0.03deg);-webkit-text-stroke:0.06px #e6e6e6;">262,782 KB</div>
<div class="t" id="t21" style="top:114px;font-size:9.7px;color:#fff;left:40.85px;transform-origin:0 0;transform:translateY(0.40px) scaleX(0.9671) rotate(0.03deg);-webkit-text-stroke:0.06px #fff;">Home</div>
<div class="t" id="t22" style="top:139px;font-size:9.7px;color:#fff;left:40.85px;transform-origin:0 0;transform:translateY(0.40px) scaleX(0.9220) rotate(0.03deg);-webkit-text-stroke:0.06px #fff;">Gallery</div>
<div class="t" id="t23" style="top:189px;font-size:9.7px;color:#fff;left:40.85px;transform-origin:0 0;transform:translateY(0.40px) scaleX(0.9704) rotate(0.03deg);-webkit-text-stroke:0.06px #fff;">Desktop</div>
<div class="t" id="t24" style="top:214px;font-size:9.7px;color:#fff;left:40.85px;transform-origin:0 0;transform:translateY(0.40px) scaleX(0.9657) rotate(0.03deg);-webkit-text-stroke:0.06px #fff;">Downloads</div>
<div class="t" id="t25" style="top:239px;font-size:9.7px;color:#fff;left:40.85px;transform-origin:0 0;transform:translateY(0.40px) scaleX(0.9774) rotate(0.03deg);-webkit-text-stroke:0.06px #fff;">Documents</div>
<div class="t" id="t26" style="top:264px;font-size:9.7px;color:#fff;left:40.85px;transform-origin:0 0;transform:translateY(0.40px) scaleX(0.9313) rotate(0.03deg);-webkit-text-stroke:0.06px #fff;">Pictures</div>
<div class="t" id="t27" style="top:289px;font-size:9.7px;color:#fff;left:40.85px;transform-origin:0 0;transform:translateY(0.40px) scaleX(0.9716) rotate(0.03deg);-webkit-text-stroke:0.06px #fff;">Music</div>
<div class="t" id="t28" style="top:314px;font-size:9.7px;color:#fff;left:40.85px;transform-origin:0 0;transform:translateY(0.40px) scaleX(0.9539) rotate(0.03deg);-webkit-text-stroke:0.06px #fff;">Videos</div>
<div class="t" id="t29" style="top:339px;font-size:9.7px;color:#fff;left:40.85px;transform-origin:0 0;transform:translateY(0.40px) scaleX(0.9264) rotate(0.03deg);-webkit-text-stroke:0.06px #fff;">Screenshots</div>
<div class="t" id="t30" style="top:389px;font-size:9.7px;color:#fff;left:40.85px;transform-origin:0 0;transform:translateY(0.40px) scaleX(0.8405) rotate(0.03deg);-webkit-text-stroke:0.06px #fff;">PROJECT LAPD</div>
<div class="t" id="t31" style="top:414px;font-size:9.7px;color:#fff;left:40.85px;transform-origin:0 0;transform:translateY(0.40px) scaleX(0.9767) rotate(0.03deg);-webkit-text-stroke:0.06px #fff;">eup</div>
<div class="t" id="t32" style="top:464px;font-size:9.7px;color:#fff;left:40.85px;transform-origin:0 0;transform:translateY(0.40px) scaleX(0.8764) rotate(0.03deg);-webkit-text-stroke:0.06px #fff;">This PC</div>
<div class="t" id="t33" style="top:489px;font-size:9.7px;color:#fff;left:40.85px;transform-origin:0 0;transform:translateY(0.40px) scaleX(0.9327) rotate(0.03deg);-webkit-text-stroke:0.06px #fff;">New Volume (E:)</div>
<div class="t" id="t34" style="top:514px;font-size:9.7px;color:#fff;left:40.85px;transform-origin:0 0;transform:translateY(0.40px) scaleX(0.9849) rotate(0.03deg);-webkit-text-stroke:0.06px #fff;">Network</div>
<div class="t" id="t35" style="top:364px;font-size:9.7px;color:#fff;left:40.85px;transform-origin:0 0;width:70.38px;overflow:hidden;transform:translateY(0.40px) scaleX(0.9747) rotate(0.03deg);-webkit-text-stroke:0.06px #fff;">Grand Theft Auto V</div>
<div class="t" id="t36" style="top:574px;font-size:9.7px;color:#e0e0e0;left:10.45px;transform-origin:0 0;transform:translateY(0.50px) scaleX(0.9795) rotate(0.03deg);-webkit-text-stroke:0.06px #e0e0e0;">2 items</div>
<div class="t" id="t37" style="top:602px;font-size:11px;color:#d9d2cc;left:289.95px;transform-origin:0 0;transform:translateY(0.00px) scaleX(0.9350) rotate(0.03deg);-webkit-text-stroke:0.04px #d9d2cc;">Search</div>
<div class="t" id="t38" style="top:595px;font-size:9.3px;color:#f4f4f4;left:27.35px;transform-origin:0 0;transform:translateY(0.70px) scaleX(0.8881) rotate(0.03deg);-webkit-text-stroke:0.06px #f4f4f4;">5°</div>
<div class="t" id="t39" style="top:596px;font-size:9.7px;color:#fff;left:822.15px;transform-origin:0 0;transform:translateY(0.40px) scaleX(0.8759) rotate(0.03deg);-webkit-text-stroke:0.06px #fff;">ENG</div>
<div class="t" id="t40" style="top:609px;font-size:9.7px;color:#fff;left:826.15px;transform-origin:0 0;transform:translateY(0.00px) scaleX(0.8238) rotate(0.03deg);-webkit-text-stroke:0.06px #fff;">US</div>
<div class="t" id="t41" style="top:595px;font-size:9.7px;color:#fff;right:33.60px;transform-origin:100% 0;transform:translateY(0.20px) scaleX(0.9367) rotate(0.03deg);-webkit-text-stroke:0.06px #fff;">9:10 PM</div>
<div class="t" id="t42" style="top:607px;font-size:9.7px;color:#fff;right:33.60px;transform-origin:100% 0;transform:translateY(0.70px) scaleX(0.9888) rotate(0.03deg);-webkit-text-stroke:0.06px #fff;">2024-11-28</div>
</div>
</body></html>
